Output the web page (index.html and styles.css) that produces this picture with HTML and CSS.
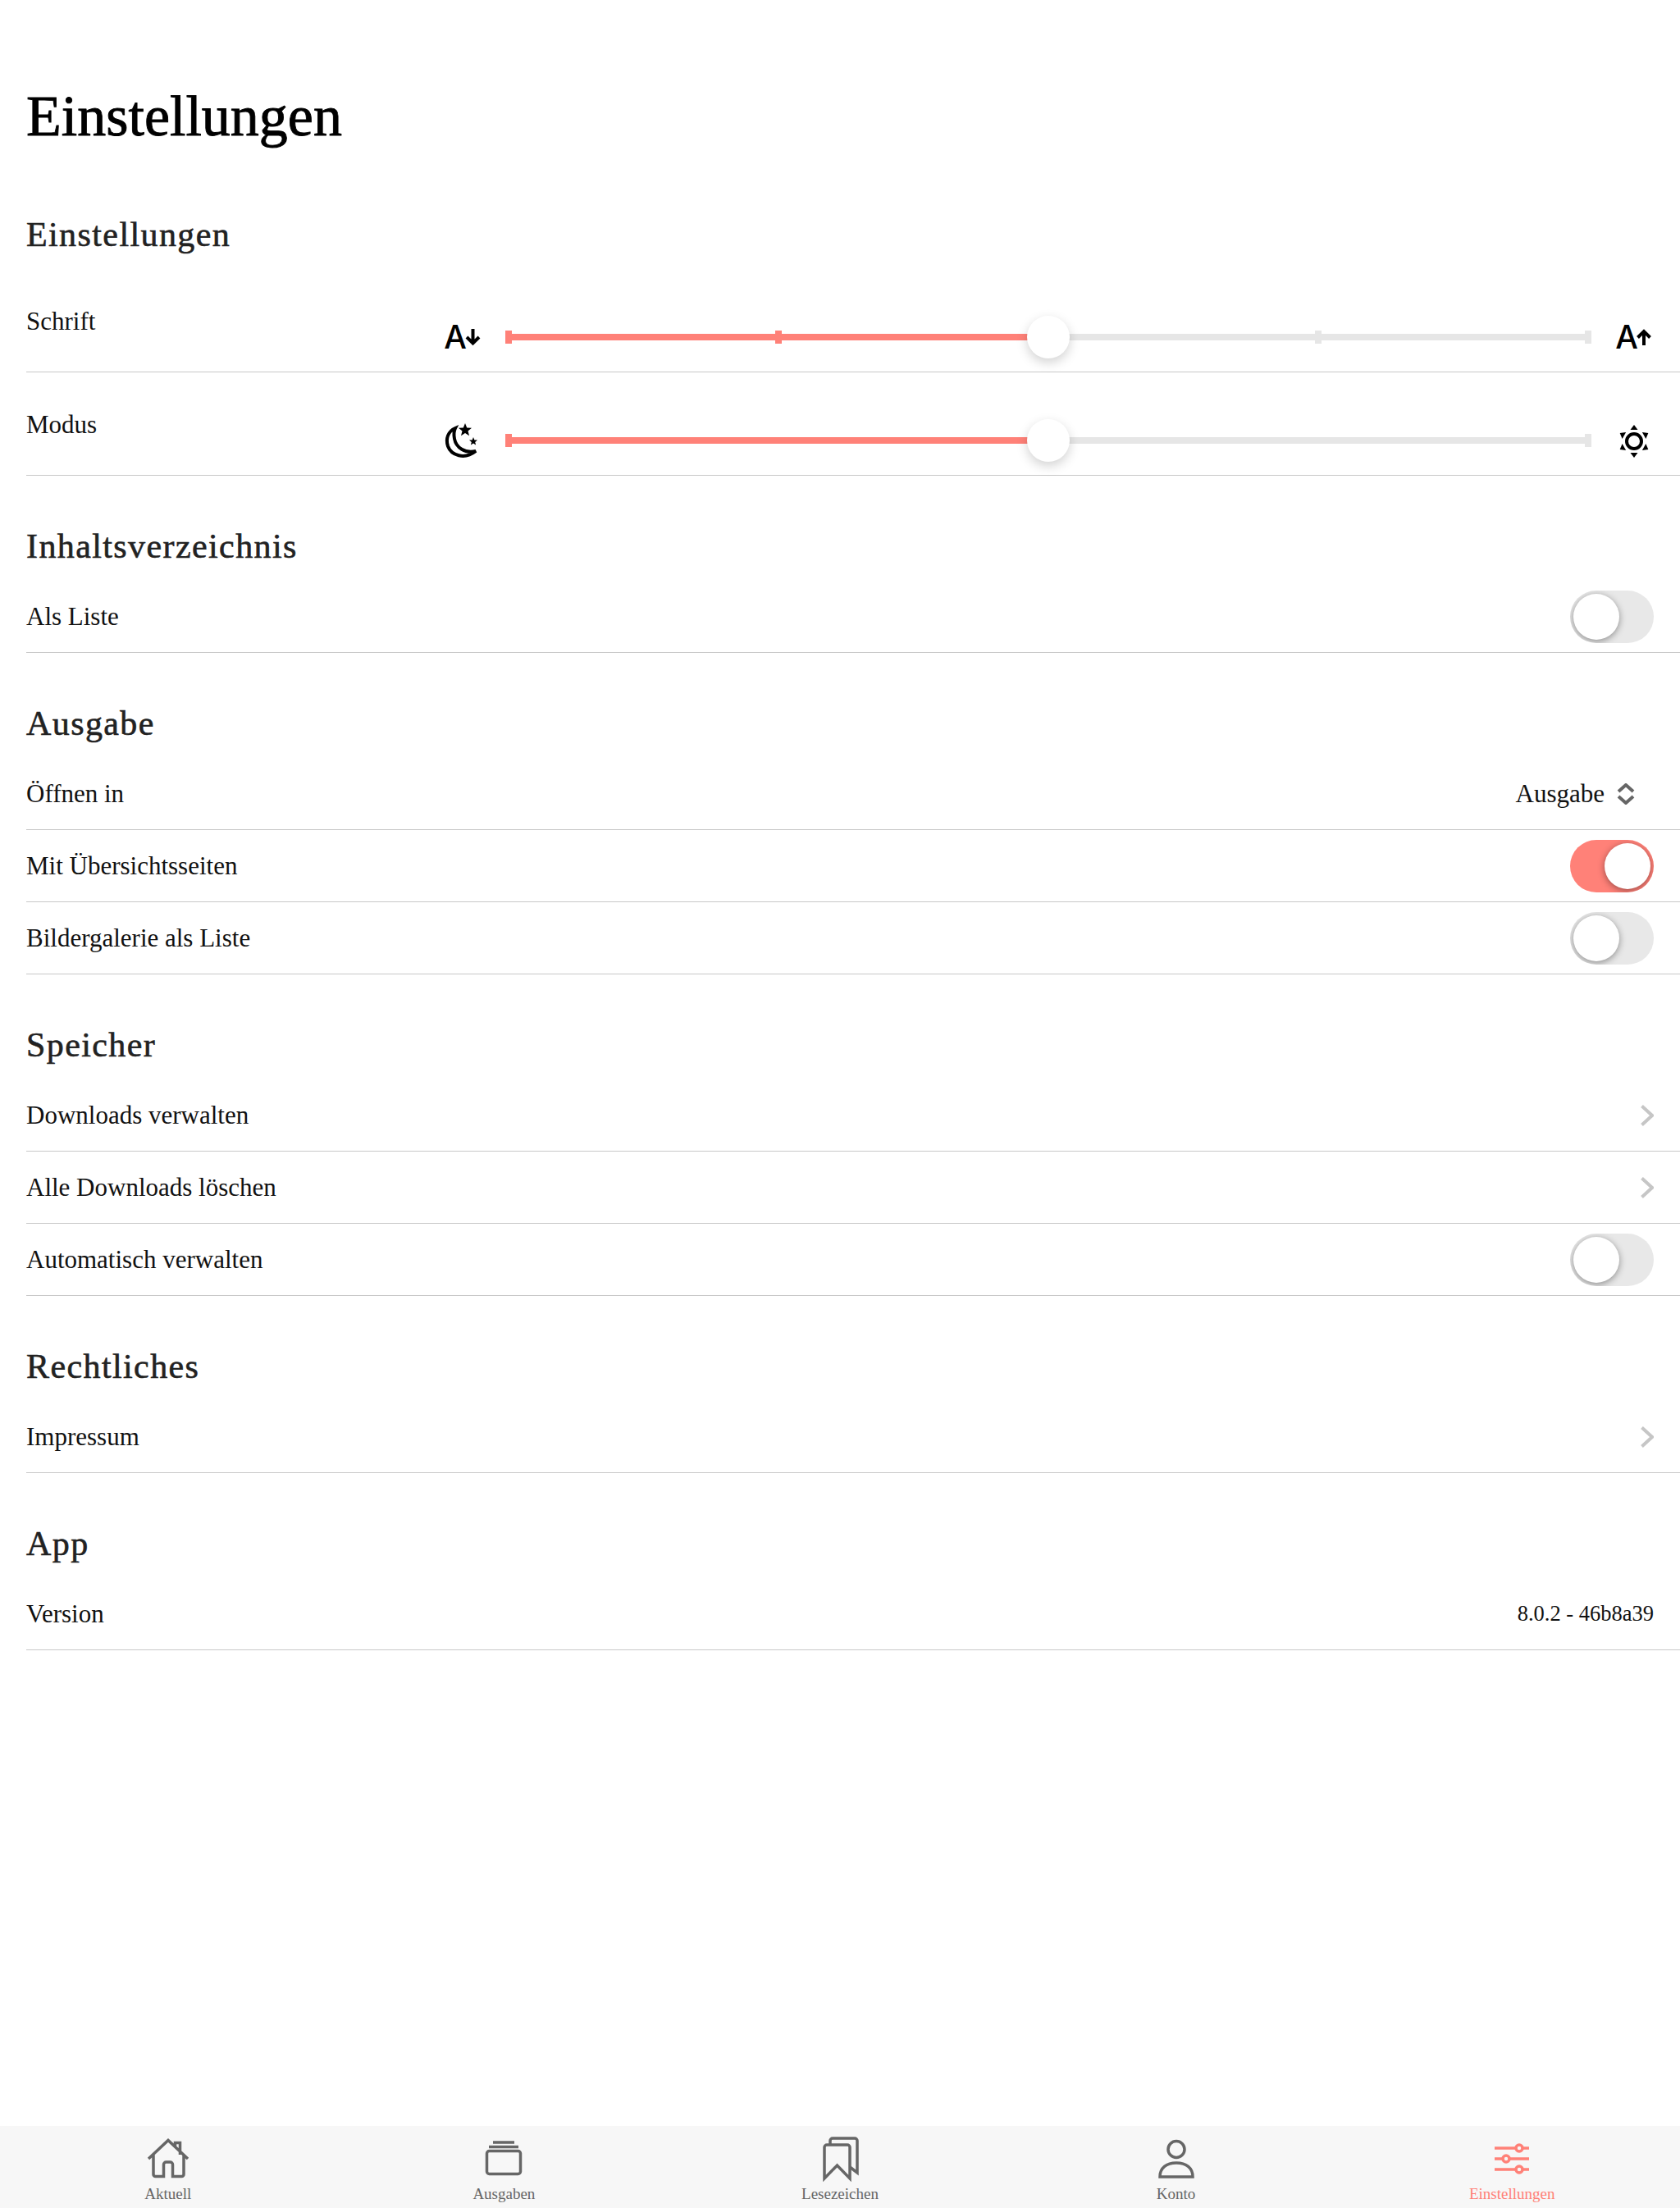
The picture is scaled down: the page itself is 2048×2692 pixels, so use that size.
FILE: index.html
```html
<!DOCTYPE html>
<html lang="de">
<head>
    <meta charset="UTF-8">
    <title>Einstellungen</title>
    <link rel="stylesheet" href="styles.css">
</head>
<body>
<div class="page">
    <main class="content">
        <h1 class="title">Einstellungen</h1>

        <h2 class="section-head">Einstellungen</h2>
        <div class="row slider-row">
            <span class="label">Schrift</span>
            <svg class="side-icon" viewBox="0 0 48 48"><text class="icon-letter" x="15" y="38">A</text><path class="icon-line" d="M36.5 14V31M29 24l7.5 7.5L44 24"/></svg>
            <div class="slider">
                <div class="fill"></div>
                <div class="ticks"><i class="on"></i><i class="on"></i><i></i><i></i><i></i></div>
                <div class="thumb"></div>
            </div>
            <svg class="side-icon" viewBox="0 0 48 48"><text class="icon-letter" x="15" y="38">A</text><path class="icon-line" d="M36 34V17M28.5 24.5L36 17l7.5 7.5"/></svg>
        </div>
        <div class="row slider-row">
            <span class="label">Modus</span>
            <svg class="side-icon" viewBox="0 0 48 48">
                <path class="icon-line" d="M15 9C6 13 3 22 6 31C10 42 26 48 40 37C27 40 16 33 14 22C13 17 13 13 15 9Z"/>
                <polygon points="27,3 29.2,8.5 35,8.8 30.5,12.5 32,18.2 27,15 22,18.2 23.5,12.5 19,8.8 24.8,8.5"/>
                <polygon points="37,20 38.4,23.4 42,23.6 39.2,25.9 40.1,29.4 37,27.4 33.9,29.4 34.8,25.9 32,23.6 35.6,23.4"/>
            </svg>
            <div class="slider">
                <div class="fill"></div>
                <div class="ticks"><i class="on"></i><i class="off"></i><i class="off"></i><i class="off"></i><i></i></div>
                <div class="thumb"></div>
            </div>
            <svg class="side-icon" viewBox="0 0 48 48">
                <circle class="icon-line" cx="24" cy="25" r="9"/>
                <polygon points="24,5 19.5,11 28.5,11"/>
                <polygon points="24,5 19.5,11 28.5,11" transform="rotate(60 24 25)"/>
                <polygon points="24,5 19.5,11 28.5,11" transform="rotate(120 24 25)"/>
                <polygon points="24,5 19.5,11 28.5,11" transform="rotate(180 24 25)"/>
                <polygon points="24,5 19.5,11 28.5,11" transform="rotate(240 24 25)"/>
                <polygon points="24,5 19.5,11 28.5,11" transform="rotate(300 24 25)"/>
            </svg>
        </div>

        <h2 class="section-head">Inhaltsverzeichnis</h2>
        <div class="row"><span class="label">Als Liste</span><div class="switch"><div class="knob"></div></div></div>

        <h2 class="section-head">Ausgabe</h2>
        <div class="row">
            <span class="label">Öffnen in</span>
            <div class="select">
                <span>Ausgabe</span>
                <svg class="updown" viewBox="0 0 22 26"><path d="M2 10l9-8 9 8M2 16l9 8 9-8"/></svg>
            </div>
        </div>
        <div class="row"><span class="label">Mit Übersichtsseiten</span><div class="switch active"><div class="knob"></div></div></div>
        <div class="row"><span class="label">Bildergalerie als Liste</span><div class="switch"><div class="knob"></div></div></div>

        <h2 class="section-head">Speicher</h2>
        <div class="row"><span class="label">Downloads verwalten</span><svg class="chevron" viewBox="0 0 16 26"><path d="M1.500 1.500L14 13L1.500 24.500"/></svg></div>
        <div class="row"><span class="label">Alle Downloads löschen</span><svg class="chevron" viewBox="0 0 16 26"><path d="M1.500 1.500L14 13L1.500 24.500"/></svg></div>
        <div class="row"><span class="label">Automatisch verwalten</span><div class="switch"><div class="knob"></div></div></div>

        <h2 class="section-head">Rechtliches</h2>
        <div class="row"><span class="label">Impressum</span><svg class="chevron" viewBox="0 0 16 26"><path d="M1.500 1.500L14 13L1.500 24.500"/></svg></div>

        <h2 class="section-head">App</h2>
        <div class="row"><span class="label">Version</span><span class="version">8.0.2 - 46b8a39</span></div>
    </main>

    <nav class="tabbar">
        <div class="tab">
            <svg viewBox="0 0 60 60"><path d="M6 28L30 5.500L54 28M12 23V47a2.500 2.500 0 0 0 2.500 2.500H24.500V35a3 3 0 0 1 3-3h5a3 3 0 0 1 3 3V49.500H46.500a2.500 2.500 0 0 0 2.500-2.500V23M38.500 13V8.500h6V23"/></svg>
            <span>Aktuell</span>
        </div>
        <div class="tab">
            <svg viewBox="0 0 60 60"><rect x="9.500" y="18.500" width="41" height="28" rx="3"/><path d="M12 13.500H48M17 8H43"/></svg>
            <span>Ausgaben</span>
        </div>
        <div class="tab">
            <svg viewBox="0 0 60 60"><path d="M18 10V6a3 3 0 0 1 3-3H48a3 3 0 0 1 3 3V45L42 38"/><path d="M11 52V14a3 3 0 0 1 3-3H39a3 3 0 0 1 3 3V52L26.500 36Z"/></svg>
            <span>Lesezeichen</span>
        </div>
        <div class="tab">
            <svg viewBox="0 0 60 60"><circle cx="30" cy="16.500" r="10"/><path d="M10 50C10 39 18 33 30 33C42 33 50 39 50 50Z"/></svg>
            <span>Konto</span>
        </div>
        <div class="tab current">
            <svg viewBox="0 0 60 60"><path d="M9 15H51M9 28H51M9 41H51"/><circle class="slider-dot" cx="39" cy="15" r="4"/><circle class="slider-dot" cx="23" cy="28" r="4"/><circle class="slider-dot" cx="39" cy="41" r="4"/></svg>
            <span>Einstellungen</span>
        </div>
    </nav>
</div>
</body>
</html>
```

FILE: styles.css
```css
*{
    box-sizing: border-box;
}
body{
    margin: 0;
    background-color: #fff;
    font-family: "Liberation Serif", "Times New Roman", serif;
    color: #111;
}
.page{
    height: 2692px;
    display: flex;
    flex-direction: column;
}
.content{
    flex: 1;
    padding-left: 32px;
}
.title{
    margin: 0;
    height: 200px;
    padding-top: 100px;
    font-size: 70px;
    line-height: 84px;
    font-weight: normal;
    color: #000;
    -webkit-text-stroke: 0.9px #000;
}
.section-head{
    margin: 0;
    height: 128px;
    padding-top: 60px;
    font-size: 42px;
    line-height: 52px;
    font-weight: normal;
    letter-spacing: 1.4px;
    color: #222;
    -webkit-text-stroke: 0.6px #222;
}
.row{
    height: 88px;
    display: flex;
    align-items: center;
    justify-content: space-between;
    padding-right: 32px;
    border-bottom: 1px solid #c8c8c8;
}
.label{
    font-size: 31px;
}

/* slider rows */
.slider-row{
    height: 126px;
    align-items: flex-start;
    justify-content: flex-start;
    padding-right: 0;
}
.slider-row .label{
    width: 508px;
    padding-top: 45px;
    line-height: 38px;
}
.side-icon{
    width: 48px;
    height: 48px;
    margin-top: 59px;
    flex: none;
}
.icon-letter{
    font-family: "Inter", "Liberation Sans", sans-serif;
    font-size: 39px;
    font-weight: 500;
    text-anchor: middle;
}
.icon-line{
    fill: none;
    stroke: #000;
    stroke-width: 4;
}
.slider{
    width: 1324px;
    height: 16px;
    margin: 75px 28px 0;
    position: relative;
    flex: none;
}
.slider::before{
    content: "";
    position: absolute;
    left: 0;
    right: 0;
    top: 4px;
    height: 8px;
    background-color: #e6e6e6;
}
.fill{
    position: absolute;
    left: 0;
    top: 4px;
    width: 50%;
    height: 8px;
    background-color: #ff8178;
}
.ticks{
    position: relative;
    height: 16px;
    display: flex;
    justify-content: space-between;
}
.ticks i{
    width: 8px;
    height: 16px;
    background-color: #e6e6e6;
}
.ticks i.on{
    background-color: #ff8178;
}
.ticks i.off{
    visibility: hidden;
}
.thumb{
    position: absolute;
    left: 636px;
    top: -18px;
    width: 52px;
    height: 52px;
    border-radius: 50%;
    background-color: #fff;
    box-shadow: 0 5px 14px rgba(0, 0, 0, 0.18);
}

/* switches */
.switch{
    width: 102px;
    height: 64px;
    padding: 4px;
    border-radius: 32px;
    background-color: #e8e8e8;
    overflow: hidden;
    display: flex;
    flex: none;
}
.switch.active{
    background-color: #ff8178;
    justify-content: flex-end;
}
.knob{
    width: 56px;
    height: 56px;
    border-radius: 50%;
    background-color: #fff;
    box-shadow: 0 2px 8px rgba(0, 0, 0, 0.4);
}

.select{
    display: flex;
    align-items: center;
    gap: 15px;
    font-size: 31px;
    padding-right: 23px;
}
.updown{
    width: 22px;
    height: 26px;
    fill: none;
    stroke: #666;
    stroke-width: 4;
}
.chevron{
    width: 16px;
    height: 26px;
    fill: none;
    stroke: #c6c6c6;
    stroke-width: 4;
}
.version{
    font-size: 26.5px;
}

/* bottom bar */
.tabbar{
    height: 100px;
    display: flex;
    background-color: #f7f7f7;
}
.tab{
    flex: 1;
    padding-top: 12px;
    display: flex;
    flex-direction: column;
    align-items: center;
    font-size: 19px;
    color: #666;
}
.tab svg{
    width: 60px;
    height: 60px;
    fill: none;
    stroke: #666;
    stroke-width: 3.5;
}
.tab span{
    line-height: 22px;
}
.tab.current{
    color: #ff8178;
}
.tab.current svg{
    stroke: #ff8178;
}
.slider-dot{
    fill: #f7f7f7;
}
```
